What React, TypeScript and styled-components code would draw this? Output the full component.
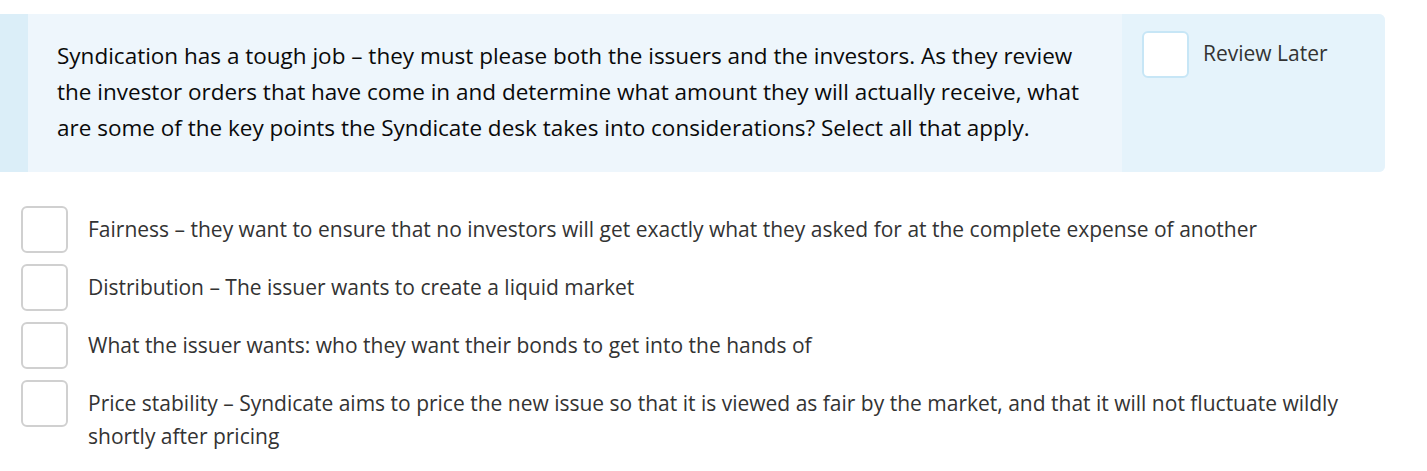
import styled, { createGlobalStyle } from 'styled-components';

const GlobalStyle = createGlobalStyle`
  body {
    margin: 0;
    background: #fff;
    font-family: 'Open Sans', 'Noto Sans', sans-serif;
  }
`;

const options = [
  'Fairness – they want to ensure that no investors will get exactly what they asked for at the complete expense of another',
  'Distribution – The issuer wants to create a liquid market',
  'What the issuer wants: who they want their bonds to get into the hands of',
  'Price stability – Syndicate aims to price the new issue so that it is viewed as fair by the market, and that it will not fluctuate wildly shortly after pricing',
];

export default function App() {
  return (
    <>
      <GlobalStyle />
      <Page>
        <QuestionBox>
          <Stripe />
          <QuestionText>
            Syndication has a tough job – they must please both the issuers and the investors. As they review
            the investor orders that have come in and determine what amount they will actually receive, what
            are some of the key points the Syndicate desk takes into considerations? Select all that apply.
          </QuestionText>
          <ReviewPanel>
            <Box $review />
            <ReviewLabel>Review Later</ReviewLabel>
          </ReviewPanel>
        </QuestionBox>

        <OptionList>
          {options.map((text) => (
            <Option key={text}>
              <Box />
              <OptionText>{text}</OptionText>
            </Option>
          ))}
        </OptionList>
      </Page>
    </>
  );
}

const Page = styled.div`
  width: 1385px;
  padding-top: 14px;
`;

const QuestionBox = styled.div`
  display: flex;
  height: 158px;
  border-radius: 0 6px 6px 0;
  overflow: hidden;
  background: #eef6fc;
`;

const Stripe = styled.div`
  flex-shrink: 0;
  width: 28px;
  background: #dbeef8;
`;

const QuestionText = styled.div`
  box-sizing: border-box;
  flex: 1;
  padding: 24px 34px 0 29px;

  font-size: 22.5px;
  line-height: 36px;
  color: #0a0a0a;
`;

const ReviewPanel = styled.div`
  box-sizing: border-box;
  display: flex;
  align-items: flex-start;
  gap: 14px;

  flex-shrink: 0;
  width: 263px;
  padding: 17px 20px 0 20px;

  background: #e5f3fb;
`;

const Box = styled.div<{ $review?: boolean }>`
  box-sizing: border-box;
  flex-shrink: 0;

  width: 47px;
  height: 47px;

  background: #fff;
  border: 2px solid ${(p) => (p.$review ? '#c7e6f6' : '#d0d0d0')};
  border-radius: 6px;
`;

const ReviewLabel = styled.div`
  padding-top: 9px;

  font-size: 21px;
  line-height: 26px;
  color: #333;
`;

const OptionList = styled.div`
  display: flex;
  flex-direction: column;
  gap: 11px;

  padding: 34px 0 0 21px;
`;

const Option = styled.div`
  display: flex;
  align-items: flex-start;
  gap: 20px;
`;

const OptionText = styled.div`
  padding-top: 7px;

  font-size: 21px;
  line-height: 33px;
  color: #333;
`;
